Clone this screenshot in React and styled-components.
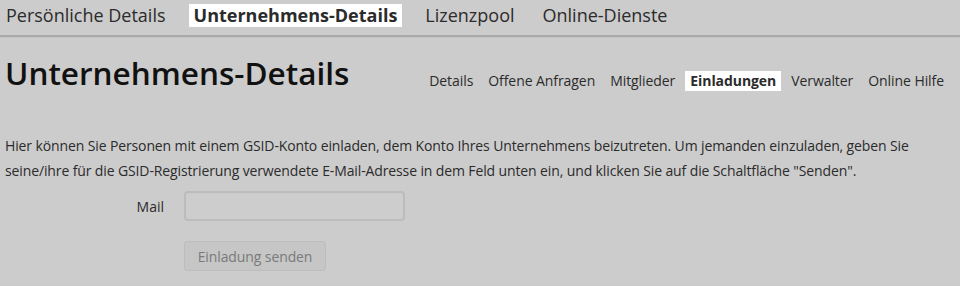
import React from "react";
import styled, { createGlobalStyle } from "styled-components";

const Global = createGlobalStyle`
  html, body { margin: 0; padding: 0; background: #cccccc; }
  body { font-family: "Open Sans", "Liberation Sans", sans-serif; color: #222; }
`;

const Page = styled.div`
  width: 960px;
  height: 286px;
  background: #cccccc;
  overflow: hidden;
`;

const TopNav = styled.nav`
  display: flex;
  align-items: center;
  gap: 18px;
  height: 37px;
  padding: 0 0 0 1px;
  border-bottom: 2px solid #a9a9a9;
  box-sizing: border-box;
  box-shadow: 0 1px 0 #c4c4c4;
`;

const TopTab = styled.span`
  font-size: 18px;
  line-height: 23px;
  padding: 0 5px;
  margin-top: -4px;
  color: #2b2b2b;
  font-weight: ${p => (p.$active ? 700 : 400)};
  background: ${p => (p.$active ? "#ffffff" : "transparent")};
`;

const Header = styled.div`
  display: flex;
  justify-content: space-between;
  align-items: flex-end;
  padding: 16px 11px 0 5px;
`;

const Title = styled.h1`
  margin: 0;
  font-size: 31.5px;
  font-weight: 600;
  line-height: 40px;
  color: #111;
`;

const SubNav = styled.div`
  display: flex;
  gap: 5px;
  margin-bottom: 2px;
`;

const SubTab = styled.span`
  font-size: 14px;
  line-height: 20px;
  padding: 0 5px;
  color: #2b2b2b;
  letter-spacing: -0.07px;
  font-weight: ${p => (p.$active ? 700 : 400)};
  background: ${p => (p.$active ? "#ffffff" : "transparent")};
`;

const Intro = styled.p`
  margin: 40px 0 0 5px;
  font-size: 14px;
  line-height: 25px;
  color: #2b2b2b;
  letter-spacing: -0.12px;
  width: 915px;
`;

const Form = styled.div`
  display: grid;
  grid-template-columns: 164px 221px;
  column-gap: 20px;
  row-gap: 20px;
  margin-top: 8px;
  align-items: center;
`;

const Label = styled.label`
  text-align: right;
  font-size: 14px;
  color: #2b2b2b;
`;

const Input = styled.input`
  box-sizing: border-box;
  width: 221px;
  height: 30px;
  border: 2px solid #bcbcbc;
  border-radius: 4px;
  background: #cdcdcd;
  outline: none;
`;

const Button = styled.button`
  grid-column: 2;
  justify-self: start;
  box-sizing: border-box;
  width: 142px;
  height: 30px;
  border: 1px solid #bdbdbd;
  border-radius: 3px;
  background: #c6c6c6;
  color: #7a7a7a;
  font-family: "Open Sans", "Liberation Sans", sans-serif;
  font-size: 14px;
  letter-spacing: -0.1px;
  padding: 0;
`;

export default function App() {
  return (
    <Page>
      <Global />
      <TopNav>
        <TopTab>Persönliche Details</TopTab>
        <TopTab $active>Unternehmens-Details</TopTab>
        <TopTab>Lizenzpool</TopTab>
        <TopTab>Online-Dienste</TopTab>
      </TopNav>
      <Header>
        <Title>Unternehmens-Details</Title>
        <SubNav>
          <SubTab>Details</SubTab>
          <SubTab>Offene Anfragen</SubTab>
          <SubTab>Mitglieder</SubTab>
          <SubTab $active>Einladungen</SubTab>
          <SubTab>Verwalter</SubTab>
          <SubTab>Online Hilfe</SubTab>
        </SubNav>
      </Header>
      <Intro>
        Hier können Sie Personen mit einem GSID-Konto einladen, dem Konto Ihres Unternehmens beizutreten. Um jemanden einzuladen, geben Sie seine/ihre für die GSID-Registrierung verwendete E-Mail-Adresse in dem Feld unten ein, und klicken Sie auf die Schaltfläche "Senden".
      </Intro>
      <Form>
        <Label htmlFor="mail">Mail</Label>
        <Input id="mail" type="text" />
        <Button>Einladung senden</Button>
      </Form>
    </Page>
  );
}
